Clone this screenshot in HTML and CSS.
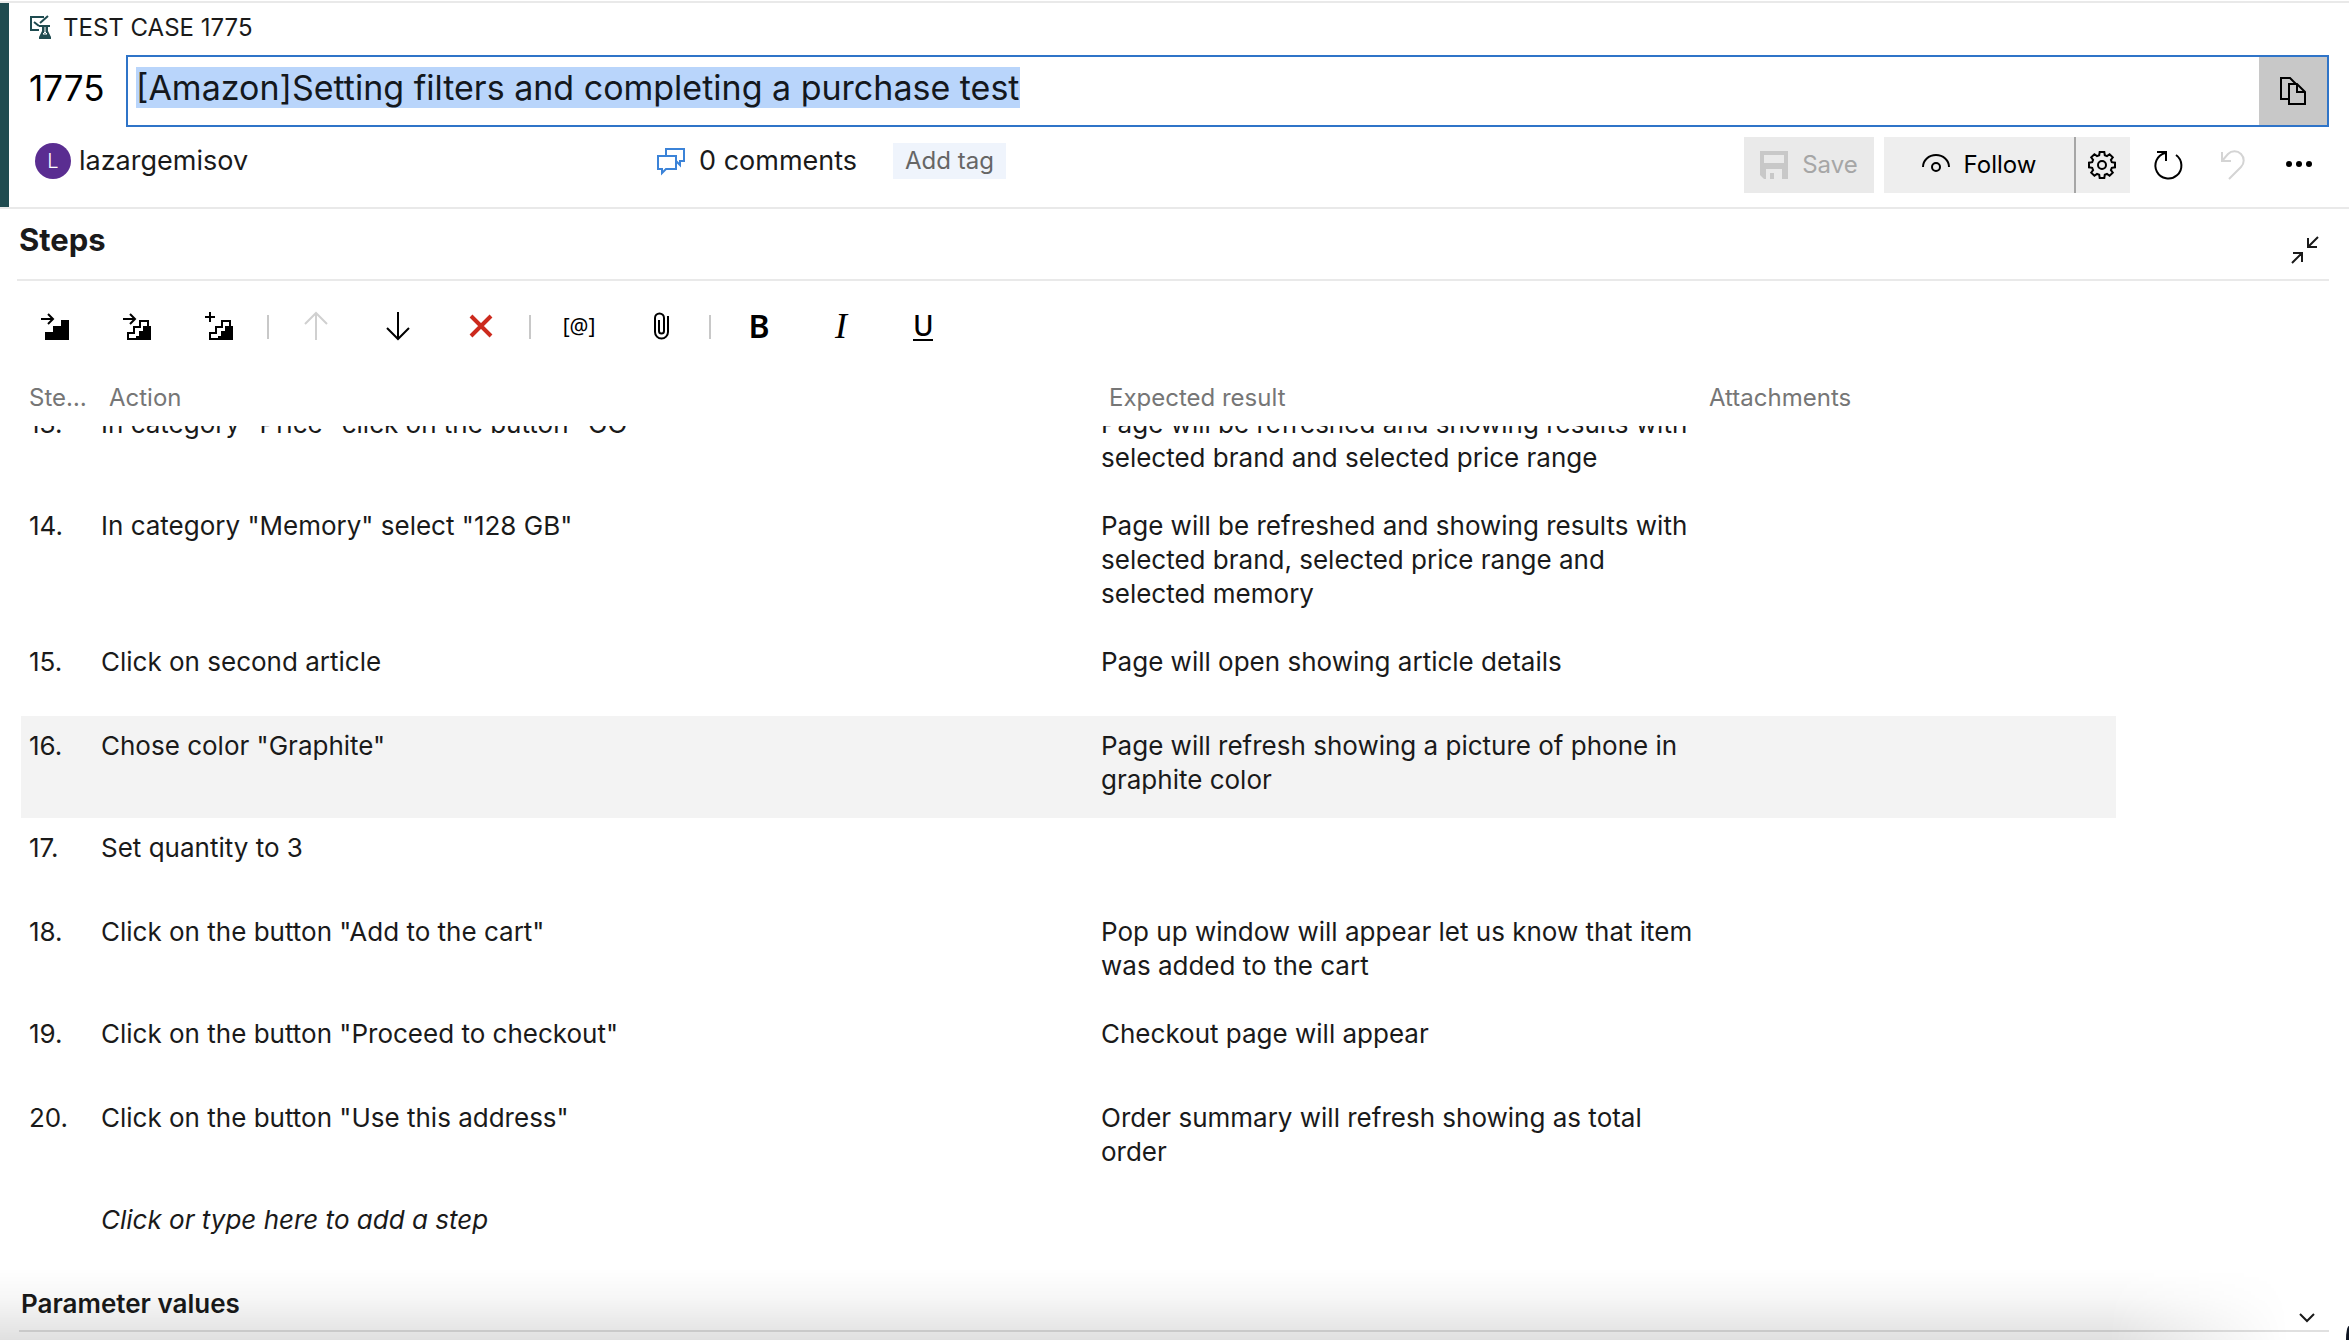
FILE: index.html
```html
<!DOCTYPE html>
<html lang="en">
<head>
<meta charset="utf-8">
<title>Test Case 1775</title>
<link rel="stylesheet" href="styles.css">
</head>
<body>
<div class="work-item">
  <header class="head">
    <div class="kind">
      <svg class="kind-icon" width="22" height="24" viewBox="0 0 22 24" fill="none" stroke="#1f4b50" stroke-width="2"><path d="M14 1H1v13h8M4 6l5 4M10 7l8-7M9 10h11"/><path d="M12 10v5l-3 6v2h12v-2l-3-6v-5z" fill="#1f4b50" stroke="none"/><path d="M15 11v5l-2 2h4l-2-2" stroke="#fff" stroke-width="1"/></svg>
      <span>TEST CASE 1775</span>
    </div>
    <div class="title-row">
      <label class="item-id" for="title">1775</label>
      <div class="title-field">
        <input class="title-input" id="title" type="text" value="[Amazon]Setting filters and completing a purchase test" autofocus>
        <button class="copy" type="button" aria-label="Copy to clipboard">
          <svg width="28" height="30" viewBox="0 0 28 30" fill="none" stroke="#000" stroke-width="2"><path d="M9 23H2V2h9l6 6"/><path d="M10 8h8l8 8v12H10zM18 8v8h8"/></svg>
        </button>
      </div>
    </div>
    <div class="meta">
      <div class="owner"><span class="avatar">L</span><span>lazargemisov</span></div>
      <button class="comments" type="button">
        <svg width="28" height="28" viewBox="0 0 28 28" fill="none" stroke="#3b83d8" stroke-width="2"><path d="M9 9V2h18v12h-4v4l-4-4"/><path d="M1 9h18v13H9l-4 4v-4H1z"/></svg>
        <span>0 comments</span>
      </button>
      <button class="tag" type="button">Add tag</button>
      <div class="actions">
        <button class="btn save" type="button" disabled>
          <svg width="28" height="28" viewBox="0 0 28 28" fill="#c8c8c8"><path fill-rule="evenodd" d="M0 0h28v28h-6V18H6v10H4l-4-4zM4 4v8h20V4z"/><path d="M10 22h4v6h-4z"/></svg>
          <span>Save</span>
        </button>
        <div class="follow-group">
          <button class="btn follow" type="button">
            <svg width="28" height="28" viewBox="0 0 28 28" fill="none" stroke="#000" stroke-width="2"><path d="M1 16a13 12 0 0 1 26 0"/><circle cx="14" cy="16" r="4"/></svg>
            <span>Follow</span>
          </button>
          <button class="btn gear" type="button" aria-label="Follow settings">
            <svg width="28" height="28" viewBox="0 0 28 28" fill="none" stroke="#000" stroke-width="2"><path d="M11.2 4.2 11.7 1H16.3L16.8 4.2 19 5.1 21.6 3.2 24.8 6.4 22.9 9 23.8 11.2 27 11.7V16.3L23.8 16.8 22.9 19 24.8 21.6 21.6 24.8 19 22.9 16.8 23.8 16.3 27H11.7L11.2 23.8 9 22.9 6.4 24.8 3.2 21.6 5.1 19 4.2 16.8 1 16.3V11.7L4.2 11.2 5.1 9 3.2 6.4 6.4 3.2 9 5.1Z"/><circle cx="14" cy="14" r="4"/></svg>
          </button>
        </div>
        <button class="plain" type="button" aria-label="Refresh">
          <svg width="28" height="30" viewBox="0 0 28 30" fill="none" stroke="#000" stroke-width="2"><path d="M2 2h9v9M10 3A13 13 0 1 0 21 5"/></svg>
        </button>
        <button class="plain" type="button" aria-label="Undo" disabled>
          <svg width="28" height="30" viewBox="0 0 28 30" fill="none" stroke="#d4d4d4" stroke-width="2"><path d="M3 2v9h9M3 11l6-7a9 9 0 0 1 13 13L10 29"/></svg>
        </button>
        <button class="plain" type="button" aria-label="More actions">
          <svg width="28" height="28" viewBox="0 0 28 28" fill="#000"><circle cx="6" cy="13" r="3"/><circle cx="16" cy="13" r="3"/><circle cx="26" cy="13" r="3"/></svg>
        </button>
      </div>
    </div>
  </header>

  <main class="steps">
    <div class="section-head">
      <h2 class="section-title">Steps</h2>
      <button class="collapse" type="button" aria-label="Collapse section">
        <svg width="28" height="28" viewBox="0 0 28 28" fill="none" stroke="#1a1a1a" stroke-width="2"><path d="M27 1 17 11M17 2v9h9M1 27l10-10M2 17h9v9"/></svg>
      </button>
    </div>
    <div class="toolbar" role="toolbar" aria-label="Step tools">
      <button class="tool" type="button" aria-label="Insert step"><svg width="28" height="28" viewBox="0 0 28 28"><path d="M28 27H4v-8h8v-6h8V7h8z"/><path d="M0 6h12M7 1l5 5-5 5" fill="none" stroke="#000" stroke-width="2"/></svg></button>
      <button class="tool" type="button" aria-label="Insert shared steps"><svg width="28" height="28" viewBox="0 0 28 28"><path d="M28 27H13v-4h3v-5h4v-5h8z"/><path d="M0 6h12M7 1l5 5-5 5M14 26H5v-6h6v-6h6V8h8v6" fill="none" stroke="#000" stroke-width="2"/></svg></button>
      <button class="tool" type="button" aria-label="Create shared steps"><svg width="28" height="28" viewBox="0 0 28 28"><path d="M28 27H13v-4h3v-5h4v-5h8z"/><path d="M0 4h10M5-1V9M14 26H5v-6h6v-6h6V8h8v6" fill="none" stroke="#000" stroke-width="2"/></svg></button>
      <span class="sep"></span>
      <button class="tool" type="button" aria-label="Move up" disabled><svg width="28" height="28" viewBox="0 0 28 28" fill="none" stroke="#d0d0d0" stroke-width="2"><path d="M13 27V0M2 11 13 0l11 11"/></svg></button>
      <button class="tool" type="button" aria-label="Move down"><svg width="28" height="28" viewBox="0 0 28 28" fill="none" stroke="#000" stroke-width="2"><path d="M13-1v27M2 15l11 11 11-11"/></svg></button>
      <button class="tool" type="button" aria-label="Delete step"><svg width="28" height="28" viewBox="0 0 28 28" fill="none" stroke="#cc2a1d" stroke-width="4"><path d="m4 3 20 20M24 3 4 23"/></svg></button>
      <span class="sep"></span>
      <button class="tool param" type="button" aria-label="Insert parameter">[@]</button>
      <button class="tool" type="button" aria-label="Add attachment"><svg width="28" height="28" viewBox="0 0 28 28" fill="none" stroke="#000" stroke-width="2"><path d="M21 3v16a6 6 0 0 1-13 0V5a4 4 0 0 1 9 0v13a2 2 0 0 1-5 0V7"/></svg></button>
      <span class="sep"></span>
      <button class="tool bold" type="button" aria-label="Bold">B</button>
      <button class="tool italic" type="button" aria-label="Italic">I</button>
      <button class="tool under" type="button" aria-label="Underline"><span class="under-mark">U</span></button>
    </div>
    <div class="scroller" id="scroller">
      <table class="grid">
        <colgroup><col class="c-num"><col><col class="c-exp"><col class="c-att"></colgroup>
        <thead><tr><th>Steps</th><th>Action</th><th>Expected result</th><th>Attachments</th></tr></thead>
        <tbody>
          <tr><td>13.</td><td>In category "Price" click on the button "GO"</td><td>Page will be refreshed and showing results with selected brand and selected price range</td><td></td></tr>
          <tr><td>14.</td><td>In category "Memory" select "128 GB"</td><td>Page will be refreshed and showing results with selected brand, selected price range and selected memory</td><td></td></tr>
          <tr><td>15.</td><td>Click on second article</td><td>Page will open showing article details</td><td></td></tr>
          <tr class="current"><td>16.</td><td>Chose color "Graphite"</td><td>Page will refresh showing a picture of phone in graphite color</td><td></td></tr>
          <tr><td>17.</td><td>Set quantity to 3</td><td></td><td></td></tr>
          <tr><td>18.</td><td>Click on the button "Add to the cart"</td><td>Pop up window will appear let us know that item was added to the cart</td><td></td></tr>
          <tr><td>19.</td><td>Click on the button "Proceed to checkout"</td><td>Checkout page will appear</td><td></td></tr>
          <tr><td>20.</td><td>Click on the button "Use this address"</td><td>Order summary will refresh showing as total order</td><td></td></tr>
          <tr class="new-step"><td></td><td>Click or type here to add a step</td><td></td><td></td></tr>
        </tbody>
      </table>
    </div>
  </main>

  <section class="params">
    <div class="params-head">
      <h3 class="params-title">Parameter values</h3>
      <button class="expand" type="button" aria-label="Expand section"><svg width="16" height="10" viewBox="0 0 16 10" fill="none" stroke="#1a1a1a" stroke-width="2"><path d="m1 1 7 7 7-7"/></svg></button>
    </div>
  </section>
  <div class="shade"></div>
</div>
<script src="page.js"></script>
</body>
</html>
```
FILE: page.js
```js
// Start with the title selected and the newest steps in view.
const title = document.getElementById('title');
title.focus();
title.select();
const scroller = document.getElementById('scroller');
scroller.scrollTop = scroller.scrollHeight;
```
FILE: styles.css
```css
* { box-sizing: border-box; }

body {
  margin: 0;
  background: #fff;
  color: #1a1a1a;
  font-family: Inter, "Liberation Sans", sans-serif;
  font-size: 26px;
  line-height: 34px;
}

button {
  display: flex;
  align-items: center;
  justify-content: center;
  padding: 0;
  border: 0;
  background: none;
  color: inherit;
  font: inherit;
  white-space: nowrap;
}

svg { display: block; flex: none; overflow: visible; }
h2, h3 { margin: 0; }

.work-item {
  position: relative;
  display: flex;
  flex-direction: column;
  height: 100vh;
  padding-top: 1px;
  overflow: hidden;
}

/* Rounded corner of the window frame */
.work-item::after {
  content: "";
  position: absolute;
  right: 0;
  bottom: 0;
  width: 3px;
  height: 14px;
  background: #0d1420;
  border-top-left-radius: 3px 14px;
}

/* Header */
.head {
  flex: none;
  padding-right: 20px;
  border-top: 2px solid #e9e9e9;
  border-bottom: 2px solid #e9e9e9;
  box-shadow: inset 9px 0 #1f4b50;
}

.kind {
  display: flex;
  align-items: center;
  gap: 11px;
  height: 52px;
  padding: 0 0 2px 30px;
  font-size: 24px;
}

.title-row { display: flex; align-items: center; }

.item-id {
  width: 126px;
  padding: 0 0 6px 29px;
  color: #000;
  font-size: 35px;
}

.title-field {
  display: flex;
  flex: 1;
  height: 72px;
  border: 2px solid #2f74c8;
}

.title-input {
  flex: 1;
  min-width: 0;
  padding: 0 8px 8px;
  border: 0;
  outline: 0;
  color: #1a1a1a;
  font: inherit;
  font-size: 34px;
  line-height: normal;
}
.title-input::selection { background: #b9d5fb; color: #14181d; }

.copy { width: 68px; background: #c8c8c8; }

.meta { display: flex; height: 80px; padding: 10px 0 0 35px; align-items: flex-start; }

.owner, .comments, .tag { height: 48px; }

.owner {
  display: flex;
  align-items: center;
  gap: 8px;
  width: 622px;
  font-size: 27px;
}

.avatar {
  width: 36px;
  height: 36px;
  border-radius: 50%;
  background: #5a2d91;
  color: #fff;
  font-size: 20px;
  font-weight: 300;
  line-height: 36px;
  text-align: center;
}

.comments { gap: 14px; font-size: 27px; }

.tag {
  height: 36px;
  margin: 6px 0 0 36px;
  padding: 0 12px;
  background: #eff4fc;
  color: #666;
  font-size: 24px;
}

.actions { display: flex; margin-left: auto; align-items: center; color: #000; }
.btn { height: 56px; background: #eee; font-size: 24px; }
.save { gap: 14px; width: 130px; margin-right: 10px; background: #eaeaea; color: #a6a6a6; }
.follow-group { display: flex; margin-right: 7px; }
.follow { gap: 14px; width: 190px; }
.gear { width: 56px; padding-right: 2px; border-left: 2px solid #a6a6a6; }
.plain { width: 64px; height: 56px; }

/* Steps */
.steps { display: flex; flex: 1; flex-direction: column; min-height: 0; }

.section-head {
  display: flex;
  flex: none;
  align-items: center;
  justify-content: space-between;
  height: 72px;
  margin: 0 20px 0 17px;
  padding: 0 10px 8px 2px;
  border-bottom: 2px solid #e9e9e9;
}

.section-title { font-size: 31px; font-weight: 700; }
.collapse { margin-top: 20px; }

.toolbar { display: flex; flex: none; align-items: center; height: 92px; padding-left: 14px; }
.tool { width: 82px; height: 56px; color: #000; }
.sep { width: 2px; height: 24px; margin: 0 7px; background: #c8c8c8; }
.param { padding-bottom: 2px; font-family: "Noto Sans", sans-serif; font-size: 21px; }
.bold { padding-bottom: 2px; font-family: "Noto Sans", sans-serif; font-size: 32px; font-weight: 600; }
.italic { padding-bottom: 2px; font-family: "Liberation Serif", serif; font-size: 36px; font-style: italic; }
.under { padding-bottom: 2px; font-family: "Noto Sans", sans-serif; font-size: 28px; font-weight: 500; }
.under-mark { width: 20px; height: 30px; border-bottom: 2px solid #000; line-height: 28px; }

.scroller {
  flex: 1;
  min-height: 0;
  padding: 0 233px 0 21px;
  overflow-y: auto;
  scrollbar-width: none;
}

.grid { width: 100%; border-spacing: 0; table-layout: fixed; }
.c-num { width: 72px; }
.c-exp { width: 600px; }
.c-att { width: 423px; }

.grid th {
  position: sticky;
  top: 0;
  height: 53px;
  padding: 10px 16px 13px;
  background: #fff;
  color: #767676;
  font-size: 24px;
  font-weight: 400;
  line-height: 30px;
  text-align: left;
  white-space: nowrap;
}

.grid th:first-child {
  padding-right: 4px;
  padding-left: 8px;
  overflow: hidden;
  text-overflow: ellipsis;
}

.grid td { height: 84px; padding: 13px 0 21px 8px; vertical-align: top; }
.current { background: #f3f3f3; }
.new-step { font-style: italic; }

/* Parameter values */
.params { flex: none; height: 66px; padding: 0 20px 0 19px; }

.params-head {
  display: flex;
  align-items: center;
  justify-content: space-between;
  height: 58px;
  padding: 4px 14px 0 2px;
  border-bottom: 2px solid #e0e0e0;
}

.params-title { font-size: 26px; font-weight: 600; }
.expand { margin-top: 28px; }

/* Soft shade along the lower edge of the window */
.shade {
  position: absolute;
  right: 60px;
  bottom: 0;
  left: 0;
  height: 72px;
  background: linear-gradient(to bottom, transparent, rgba(0, 0, 0, 0.03) 40%, rgba(0, 0, 0, 0.12));
  -webkit-mask-image: linear-gradient(to left, transparent, #000 180px);
  mask-image: linear-gradient(to left, transparent, #000 180px);
  pointer-events: none;
}
```
